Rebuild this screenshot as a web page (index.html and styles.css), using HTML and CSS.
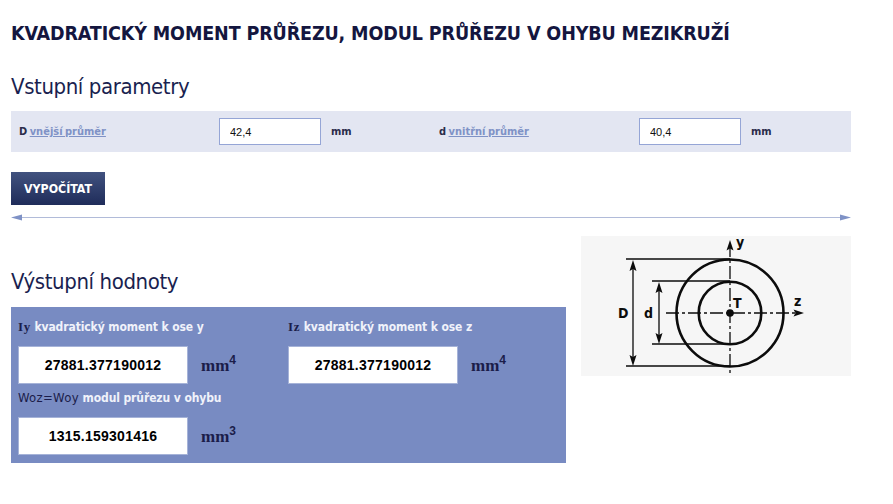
FILE: index.html
```html
<!DOCTYPE html>
<html lang="cs">
<head>
<meta charset="utf-8">
<title>Kvadratický moment průřezu</title>
<link rel="stylesheet" href="styles.css">
</head>
<body>
<main class="page">
  <h1 class="title">KVADRATICKÝ MOMENT PRŮŘEZU, MODUL PRŮŘEZU V OHYBU MEZIKRUŽÍ</h1>
  <h2 class="heading heading-input">Vstupní parametry</h2>
  <form class="inputs">
    <div class="param">
      <label class="param-label"><b>D</b> <a href="#">vnější průměr</a></label>
      <input class="param-input" type="text" value="42,4">
      <span class="param-unit">mm</span>
    </div>
    <div class="param">
      <label class="param-label"><b>d</b> <a href="#">vnitřní průměr</a></label>
      <input class="param-input" type="text" value="40,4">
      <span class="param-unit">mm</span>
    </div>
  </form>
  <button class="submit" type="button">VYPOČÍTAT</button>
  <svg class="divider" width="840" height="7" viewBox="0 0 840 7">
    <rect x="8" y="3" width="824" height="1" fill="#b1bbd9"/>
    <path d="M0 3.5 11 0.5V6.5Z" fill="#7f92c6"/>
    <path d="M840 3.5 829 0.5V6.5Z" fill="#7f92c6"/>
  </svg>
  <div class="results">
    <section class="results-main">
      <h2 class="heading heading-output">Výstupní hodnoty</h2>
      <div class="panel">
        <div class="out">
          <div class="out-label"><span class="sym">Iy</span> kvadratický moment k ose y</div>
          <div class="out-row"><output class="out-value">27881.377190012</output><span class="out-unit">mm<sup>4</sup></span></div>
        </div>
        <div class="out">
          <div class="out-label"><span class="sym">Iz</span> kvadratický moment k ose z</div>
          <div class="out-row"><output class="out-value">27881.377190012</output><span class="out-unit">mm<sup>4</sup></span></div>
        </div>
        <div class="out">
          <div class="out-label"><span class="sym sym-sans">Woz=Woy</span> modul průřezu v ohybu</div>
          <div class="out-row"><output class="out-value">1315.159301416</output><span class="out-unit">mm<sup>3</sup></span></div>
        </div>
      </div>
    </section>
    <svg class="figure" width="270" height="140" viewBox="0 0 270 140">
      <rect width="270" height="140" fill="#f6f6f6"/>
      <g fill="none" stroke="#0c0c0c">
        <circle cx="149" cy="77" r="53.5" stroke-width="2.6"/>
        <circle cx="149" cy="77" r="31.3" stroke-width="2.6"/>
        <path d="M45 23H149M45 130H149M71 45H149M71 108H149" stroke-width="1.6"/>
        <path d="M52 27V127M78 49V105" stroke-width="1.3"/>
        <path d="M149 8V137" stroke-width="1.3" stroke-dasharray="13 3 3 3"/>
        <path d="M85 77H220" stroke-width="1.3" stroke-dasharray="13 3 3 3"/>
      </g>
      <g fill="#0c0c0c">
        <path d="M149 4 145.500 14.500 149 12.500 152.500 14.500Z"/>
        <path d="M223 77 212.500 73.500 214.500 77 212.500 80.500Z"/>
        <path d="M52 24 48.500 35 52 33 55.500 35Z"/>
        <path d="M52 130 48.500 119 52 121 55.500 119Z"/>
        <path d="M78 46 74.500 57 78 55 81.500 57Z"/>
        <path d="M78 108 74.500 97 78 99 81.500 97Z"/>
        <circle cx="149" cy="77" r="3.800"/>
      </g>
      <g class="figure-text">
        <text x="155" y="11">y</text>
        <text x="213" y="70">z</text>
        <text x="152" y="72">T</text>
        <text x="37" y="82">D</text>
        <text x="63" y="82">d</text>
      </g>
    </svg>
  </div>
</main>
</body>
</html>
```

FILE: styles.css
```css
* { box-sizing: border-box; }
html, body { margin: 0; padding: 0; background: #fff; }
body { font-family: "DejaVu Sans", sans-serif; font-stretch: condensed; color: #14163f; }
.page { width: 840px; margin-left: 11px; }
.title { margin: 0; padding-top: 21px; height: 62px; font-size: 19.5px; letter-spacing: -.13px; line-height: 26px; font-weight: 700; color: #14163f; }
.heading { margin: 0; font-weight: 400; font-size: 22px; letter-spacing: -.4px; line-height: 30px; color: #1a1f50; }
.heading-input { height: 49px; padding-top: 10px; }
.inputs { display: flex; height: 41px; background: #e3e6f2; }
.param { flex: 0 0 420px; display: flex; align-items: center; padding-left: 8px; font-size: 11px; font-weight: 700; color: #2a2c4a; }
.param-label { width: 200px; word-spacing: -1px; }
.param-label a { color: #7f92c6; }
.param-input { width: 102px; height: 27px; padding: 0 10px; border: 1px solid #95a5d6; background: #fff; font: 400 11px "Liberation Sans", sans-serif; color: #111; }
.param-unit { margin-left: 10px; }
.submit { display: block; margin-top: 20px; width: 94px; height: 33px; padding: 0; border: 0; background: linear-gradient(#41527f, #1f2c5a); color: #fff; font: 700 12.3px "DejaVu Sans", sans-serif; font-stretch: condensed; }
.divider { display: block; margin-top: 9px; }
.results { display: flex; justify-content: space-between; margin-top: 15px; }
.results-main { width: 555px; padding-top: 29px; }
.heading-output { height: 42px; padding-top: 2px; }
.panel { display: grid; grid-template-columns: 270px 270px; padding: 7px 7px 7px; background: #788bc2; }
.out-label { height: 32px; line-height: 26px; font-size: 12px; letter-spacing: -.1px; font-weight: 700; color: #f0f2fa; white-space: nowrap; }
.sym { font-family: "Liberation Serif", serif; font-size: 13px; letter-spacing: .6px; color: #1b1d4a; }
.sym-sans { font-family: "DejaVu Sans", sans-serif; font-size: 13px; letter-spacing: .3px; font-weight: 400; }
.out-row { display: flex; align-items: center; height: 38px; margin-bottom: 1px; }
.out-value { display: block; width: 170px; height: 38px; border: 1px solid #a6b3d8; background: #fff; color: #000; text-align: center; font: 700 14px/36px "Liberation Sans", sans-serif; letter-spacing: .25px; }
.out-unit { margin-left: 13px; padding-top: 2px; font: 700 17px "Liberation Serif", serif; color: #1b1d4a; }
.out-unit sup { font: 700 12px "Liberation Sans", sans-serif; line-height: 0; }
.figure { display: block; flex: none; overflow: visible; }
.figure-text { font: 700 14px "DejaVu Sans", sans-serif; font-stretch: condensed; fill: #0c0c0c; }
```
